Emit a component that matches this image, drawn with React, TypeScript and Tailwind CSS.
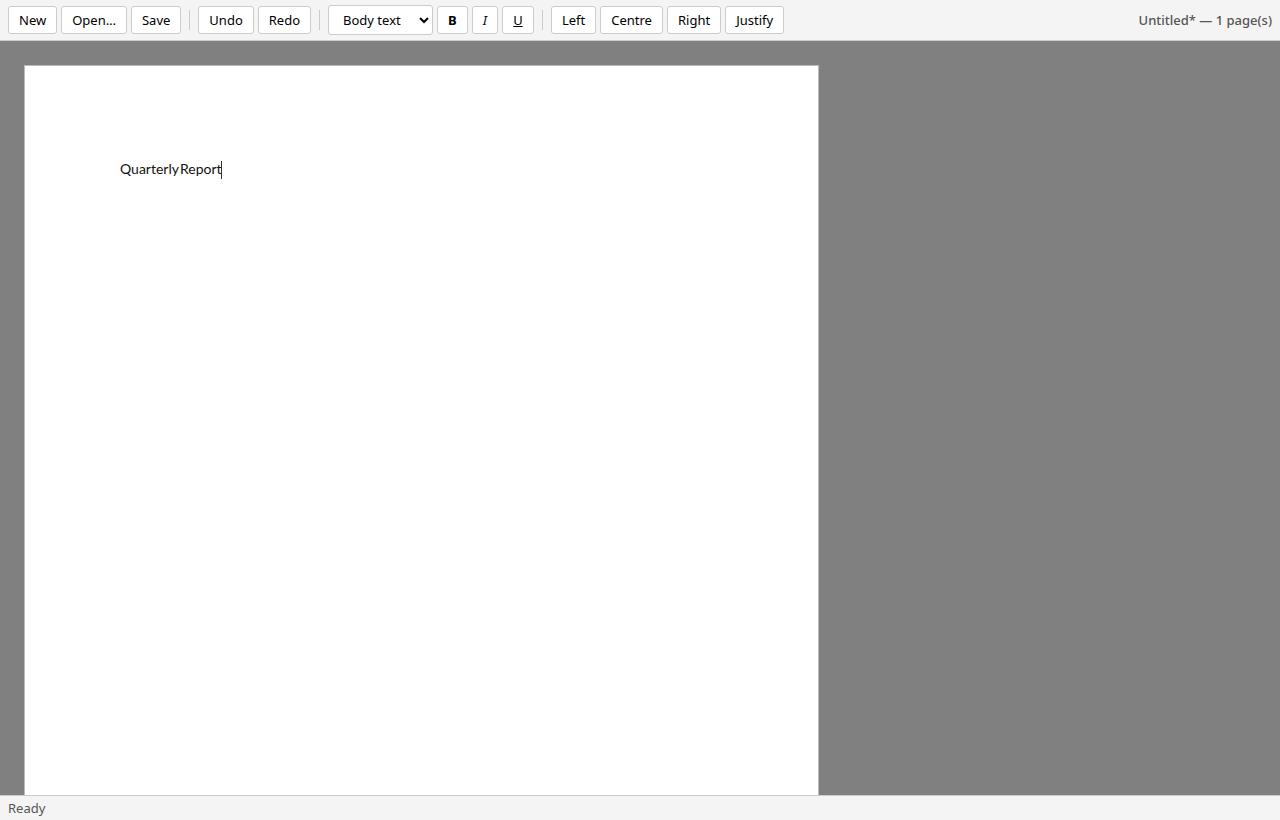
import type { ReactNode } from "react";

type ToolButtonProps = {
  title?: string;
  className?: string;
  children: ReactNode;
};

const ToolButton = ({ title, className = "", children }: ToolButtonProps) => (
  <button
    type="button"
    title={title}
    className={`h-7 shrink-0 rounded-[3px] border border-[#cccccc] bg-white px-2.5 text-black hover:bg-[#eeeeee] ${className}`}
  >
    {children}
  </button>
);

const Separator = () => <span className="mx-1 h-5 w-px shrink-0 bg-[#cccccc]" />;

const Toolbar = () => {
  return (
    <header className="flex h-[41px] shrink-0 items-center gap-1 border-b border-[#cccccc] bg-[#f4f4f4] px-2">
      <ToolButton>New</ToolButton>
      <ToolButton>Open…</ToolButton>
      <ToolButton>Save</ToolButton>
      <Separator />
      <ToolButton>Undo</ToolButton>
      <ToolButton>Redo</ToolButton>
      <Separator />
      <select
        aria-label="Paragraph style"
        defaultValue="body"
        className="h-[30px] w-[105px] shrink-0 rounded-[3px] border border-[#cccccc] bg-white px-2.5 text-black"
      >
        <option value="body">Body text</option>
        <option value="h1">Heading 1</option>
        <option value="h2">Heading 2</option>
        <option value="h3">Heading 3</option>
      </select>
      <ToolButton title="Bold" className="font-bold">
        B
      </ToolButton>
      <ToolButton title="Italic" className="italic">
        I
      </ToolButton>
      <ToolButton title="Underline" className="w-8 underline">
        U
      </ToolButton>
      <Separator />
      <ToolButton>Left</ToolButton>
      <ToolButton>Centre</ToolButton>
      <ToolButton>Right</ToolButton>
      <ToolButton>Justify</ToolButton>
      <span className="ml-auto whitespace-nowrap font-medium text-[#555555]">
        Untitled* — 1 page(s)
      </span>
    </header>
  );
};

// A4 sheet with one inch margins
const Page = () => {
  return (
    <article className="min-h-[1123px] w-[795px] border border-[#bbbbbb] bg-white p-[95px] font-[Lato,sans-serif] text-[14px] leading-4 text-[#111111]">
      <p className="relative flex w-fit gap-px">
        <span>Quarterly</span> <span>Report</span>
        {/* caret */}
        <span className="absolute top-0 right-0 h-[18px] w-px bg-[#333333]" />
      </p>
    </article>
  );
};

const App = () => {
  return (
    <div className="flex h-screen flex-col font-['Noto_Sans',sans-serif] text-[13px] leading-[18px]">
      <Toolbar />
      <main className="min-h-0 flex-1 overflow-hidden bg-[#808080] p-6">
        <Page />
      </main>
      <footer className="shrink-0 border-t border-[#cccccc] bg-[#f4f4f4] px-2 py-[3px] text-[#555555]">
        Ready
      </footer>
    </div>
  );
};

export default App;
